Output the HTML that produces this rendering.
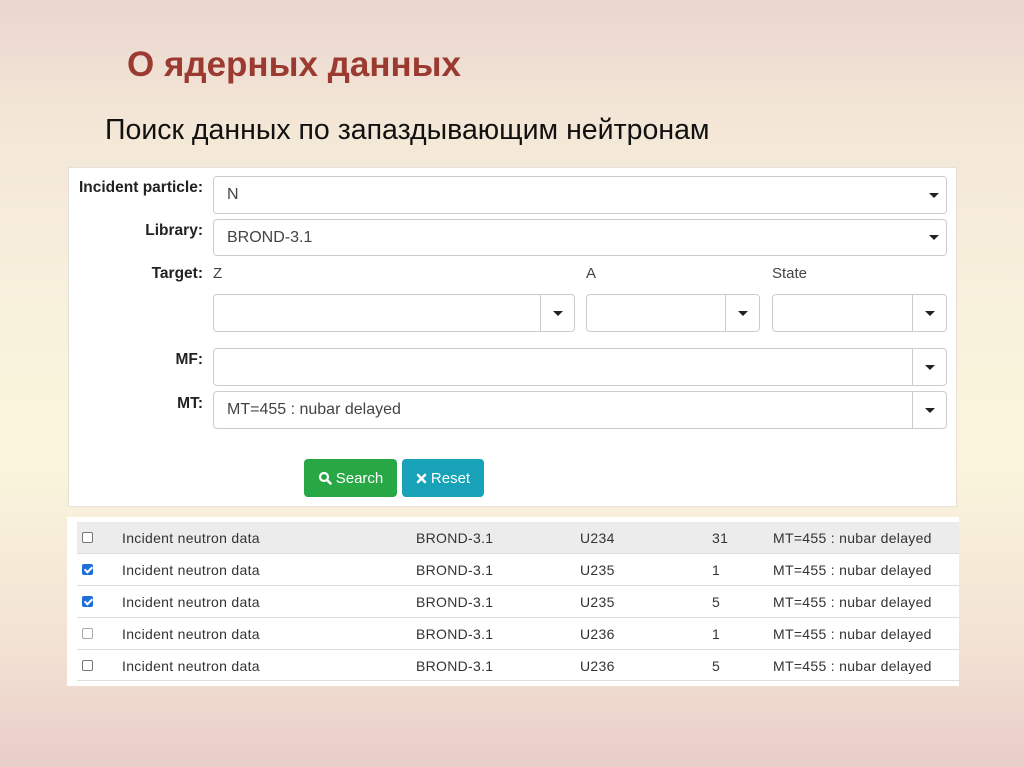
<!DOCTYPE html>
<html><head><meta charset="utf-8"><style>
*{box-sizing:border-box;margin:0;padding:0}
body{width:1024px;height:767px;overflow:hidden;position:relative;font-family:"Liberation Sans",sans-serif;
background:linear-gradient(180deg,#ead5cf 0%,#f3e6d6 15%,#f8f1dc 40%,#faf5dc 60%,#f2e1d3 85%,#e8cdc8 100%)}
.a{position:absolute}
h1{position:absolute;left:127px;top:45px;font-size:35px;font-weight:bold;color:#9a3a30;white-space:nowrap}
.sub{left:105px;top:114px;font-size:28.5px;color:#111;white-space:nowrap}
.panel{left:68px;top:167px;width:889px;height:340px;background:#fff;border:1px solid #e6e0d8}
.lbl{font-size:15.5px;font-weight:bold;color:#222;text-align:right;width:160px;left:43px;white-space:nowrap}
.inp{border:1px solid #ccc;border-radius:4px;background:#fff;font-size:16px;color:#444;padding-left:13px;display:flex;align-items:center}
.btn{border:1px solid #ccc;background:#fff;display:flex;align-items:center;justify-content:center}
.car{width:0;height:0;border-left:5px solid transparent;border-right:5px solid transparent;border-top:5px solid #222}
.l2{font-size:15px;color:#444}
.table{left:67px;top:517px;width:892px;height:169px;background:#fff}
.row{position:absolute;left:10px;width:882px;height:32px;border-top:1px solid #ddd;font-size:14px;letter-spacing:0.3px;color:#333}
.row span{position:absolute;top:8px;white-space:nowrap}
.cb{position:absolute;left:5px;top:10px;width:11px;height:11px;border:1px solid #777;border-radius:2px;background:#fff}
.cb.on{background:#1e6fd9;border-color:#1e6fd9}
.cb.on:after{content:"";position:absolute;left:3px;top:0px;width:3px;height:6px;border:solid #fff;border-width:0 2px 2px 0;transform:rotate(45deg)}
</style></head><body>
<h1>О ядерных данных</h1>
<div class="a sub">Поиск данных по запаздывающим нейтронам</div>
<div class="a panel"></div>
<div class="a lbl" style="top:179px">Incident particle:</div>
<div class="a lbl" style="top:222px">Library:</div>
<div class="a lbl" style="top:265px">Target:</div>
<div class="a lbl" style="top:351px">MF:</div>
<div class="a lbl" style="top:395px">MT:</div>
<div class="a inp" style="left:213px;top:176px;width:734px;height:38px">N</div>
<div class="a car" style="left:929px;top:193px"></div>
<div class="a inp" style="left:213px;top:219px;width:734px;height:37px">BROND-3.1</div>
<div class="a car" style="left:929px;top:235px"></div>
<div class="a l2" style="left:213px;top:265px">Z</div>
<div class="a l2" style="left:586px;top:265px">A</div>
<div class="a l2" style="left:772px;top:265px">State</div>
<div class="a inp" style="left:213px;top:294px;width:328px;height:38px;border-radius:4px 0 0 4px"></div>
<div class="a btn" style="left:540px;top:294px;width:35px;height:38px;border-radius:0 4px 4px 0"><div class="car"></div></div>
<div class="a inp" style="left:586px;top:294px;width:140px;height:38px;border-radius:4px 0 0 4px"></div>
<div class="a btn" style="left:725px;top:294px;width:35px;height:38px;border-radius:0 4px 4px 0"><div class="car"></div></div>
<div class="a inp" style="left:772px;top:294px;width:141px;height:38px;border-radius:4px 0 0 4px"></div>
<div class="a btn" style="left:912px;top:294px;width:35px;height:38px;border-radius:0 4px 4px 0"><div class="car"></div></div>
<div class="a inp" style="left:213px;top:348px;width:700px;height:38px;border-radius:4px 0 0 4px"></div>
<div class="a btn" style="left:912px;top:348px;width:35px;height:38px;border-radius:0 4px 4px 0"><div class="car"></div></div>
<div class="a inp" style="left:213px;top:391px;width:700px;height:38px;border-radius:4px 0 0 4px">MT=455 : nubar delayed</div>
<div class="a btn" style="left:912px;top:391px;width:35px;height:38px;border-radius:0 4px 4px 0"><div class="car"></div></div>
<div class="a" style="left:304px;top:459px;width:93px;height:38px;background:#28a745;border-radius:4px;color:#fff;font-size:15px;display:flex;align-items:center;justify-content:center;gap:4px">
<svg width="14" height="14" viewBox="0 0 14 14"><circle cx="6" cy="6" r="4" fill="none" stroke="#fff" stroke-width="2.2"/><path d="M9 9L12.5 12.5" stroke="#fff" stroke-width="2.6" stroke-linecap="round"/></svg>Search</div>
<div class="a" style="left:402px;top:459px;width:82px;height:38px;background:#17a2b8;border-radius:4px;color:#fff;font-size:15px;display:flex;align-items:center;justify-content:center;gap:4px">
<svg width="11" height="11" viewBox="0 0 11 11"><path d="M2 2L9 9M9 2L2 9" stroke="#fff" stroke-width="2.6" stroke-linecap="round"/></svg>Reset</div>
<div class="a table">
<div class="row" style="top:5px;background:#ececec;border-top:none"><div class="cb"></div><span style="left:45px">Incident neutron data</span><span style="left:339px">BROND-3.1</span><span style="left:503px">U234</span><span style="left:635px">31</span><span style="left:696px">MT=455 : nubar delayed</span></div>
<div class="row" style="top:36px"><div class="cb on"></div><span style="left:45px">Incident neutron data</span><span style="left:339px">BROND-3.1</span><span style="left:503px">U235</span><span style="left:635px">1</span><span style="left:696px">MT=455 : nubar delayed</span></div>
<div class="row" style="top:68px"><div class="cb on"></div><span style="left:45px">Incident neutron data</span><span style="left:339px">BROND-3.1</span><span style="left:503px">U235</span><span style="left:635px">5</span><span style="left:696px">MT=455 : nubar delayed</span></div>
<div class="row" style="top:100px"><div class="cb" style="border-color:#aaa"></div><span style="left:45px">Incident neutron data</span><span style="left:339px">BROND-3.1</span><span style="left:503px">U236</span><span style="left:635px">1</span><span style="left:696px">MT=455 : nubar delayed</span></div>
<div class="row" style="top:132px;border-bottom:1px solid #ddd"><div class="cb"></div><span style="left:45px">Incident neutron data</span><span style="left:339px">BROND-3.1</span><span style="left:503px">U236</span><span style="left:635px">5</span><span style="left:696px">MT=455 : nubar delayed</span></div>
</div>
</body></html>
